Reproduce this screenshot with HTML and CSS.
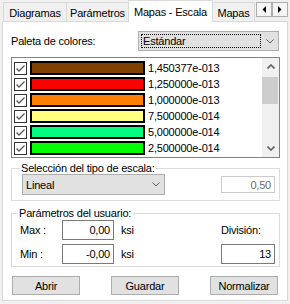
FILE: index.html
```html
<!DOCTYPE html>
<html lang="es">
<head>
    <meta charset="UTF-8">
    <title>Mapas - Escala</title>
    <link rel="stylesheet" href="styles.css">
</head>
<body>
    <div class="window">
        <div class="tabbar">
            <div class="tab t-diag">Diagramas</div>
            <div class="tab t-param">Parámetros</div>
            <div class="tab active t-escala">Mapas - Escala</div>
            <div class="tab t-mapas">Mapas</div>
            <div class="tab-arrows">
                <span class="arrow-btn"><svg width="4" height="7" viewBox="0 0 4 7"><polygon points="4,0 4,7 0.5,3.5" fill="#000"/></svg></span>
                <span class="arrow-btn"><svg width="4" height="7" viewBox="0 0 4 7"><polygon points="0,0 0,7 3.5,3.5" fill="#000"/></svg></span>
            </div>
        </div>

        <div class="panel">
            <div class="palette-row">
                <span class="label">Paleta de colores:</span>
                <div class="select">
                    <span class="focus">Estándar</span>
                    <span class="chevron"><svg width="8" height="5" viewBox="0 0 8 5"><polyline points="0.5,0.5 4,4 7.5,0.5" fill="none" stroke="#606060" stroke-width="1"/></svg></span>
                </div>
            </div>

            <div class="list">
                <div class="rows" id="rows"></div>
                <div class="scrollbar">
                    <div class="sb-btn"><svg width="8" height="5" viewBox="0 0 8 5"><polyline points="0.5,4.5 4,1 7.5,4.5" fill="none" stroke="#606060" stroke-width="1.6"/></svg></div>
                    <div class="sb-track"><div class="sb-thumb"></div></div>
                    <div class="sb-btn"><svg width="8" height="5" viewBox="0 0 8 5"><polyline points="0.5,0.5 4,4 7.5,0.5" fill="none" stroke="#606060" stroke-width="1.6"/></svg></div>
                </div>
            </div>

            <fieldset class="group group-scale">
                <legend>Selección del tipo de escala:</legend>
                <div class="scale-row">
                    <div class="combo">
                        <span class="combo-text">Lineal</span>
                        <span class="chevron"><svg width="8" height="5" viewBox="0 0 8 5"><polyline points="0.5,0.5 4,4 7.5,0.5" fill="none" stroke="#606060" stroke-width="1"/></svg></span>
                    </div>
                    <input class="box disabled" type="text" value="0,50" disabled>
                </div>
            </fieldset>

            <fieldset class="group group-user">
                <legend>Parámetros del usuario:</legend>
                <div class="param-row">
                    <span class="param-label">Max :</span>
                    <input class="box num" type="text" value="0,00">
                    <span class="unit">ksi</span>
                    <span class="division">División:</span>
                </div>
                <div class="param-row second">
                    <span class="param-label">Min :</span>
                    <input class="box num" type="text" value="-0,00">
                    <span class="unit">ksi</span>
                    <input class="box num division-box" type="text" value="13">
                </div>
            </fieldset>

            <div class="buttons">
                <button class="button">Abrir</button>
                <button class="button">Guardar</button>
                <button class="button">Normalizar</button>
            </div>
        </div>
    </div>

    <script>
        const palette = [
            ['#804000', '1,450377e-013'],
            ['#ff0000', '1,250000e-013'],
            ['#ff8000', '1,000000e-013'],
            ['#ffff80', '7,500000e-014'],
            ['#00ff80', '5,000000e-014'],
            ['#00ff00', '2,500000e-014']
        ];

        const check = '<svg width="11" height="11" viewBox="0 0 11 11"><polyline points="1.5,5.5 4,8 9.5,2.5" fill="none" stroke="#555" stroke-width="1.3"/></svg>';

        document.getElementById('rows').innerHTML = palette.map(([color, value]) => `
            <div class="row">
                <span class="check">${check}</span>
                <span class="swatch" style="background-color: ${color}"></span>
                <span class="value">${value}</span>
            </div>`).join('');
    </script>
</body>
</html>
```

FILE: styles.css
```css
body {
    margin: 0;
    background-color: #f0f0f0;
    font-family: "Liberation Sans", Arial, sans-serif;
    font-size: 11px;
    letter-spacing: -0.2px;
    color: #000;
}
.window {
    width: 290px;
    height: 304px;
    overflow: hidden;
    background-color: #f0f0f0;
}

/* tabs */
.tabbar {
    display: flex;
    align-items: flex-end;
    height: 21px;
    padding-left: 3px;
}
.tab {
    box-sizing: border-box;
    height: 19px;
    margin-left: -1px;
    padding-top: 2px;
    border: 1px solid #d9d9d9;
    border-bottom: none;
    background-color: #f0f0f0;
    text-align: center;
    line-height: 16px;
    white-space: nowrap;
}
.tab:first-child {
    margin-left: 0;
}
.tab.active {
    height: 22px;
    margin-bottom: -1px;
    padding-top: 3px;
    background-color: #fff;
    position: relative;
    z-index: 1;
}
.t-diag { width: 64px; }
.t-param { width: 63px; }
.t-escala { width: 85px; }
.t-mapas { width: 43px; }
.tab-arrows {
    display: flex;
    align-self: flex-start;
    margin: 2px 2px 0 auto;
}
.arrow-btn {
    box-sizing: border-box;
    display: flex;
    align-items: center;
    justify-content: center;
    width: 16px;
    height: 15px;
    border: 1px solid #adadad;
    background-color: #f5f5f5;
}

/* panel */
.panel {
    box-sizing: border-box;
    display: flex;
    flex-direction: column;
    width: 286px;
    height: 280px;
    margin-left: 2px;
    padding: 9px 7px 0 8px;
    border: 1px solid #d9d9d9;
    background-color: #fff;
}
.palette-row {
    display: flex;
    height: 20px;
}
.label {
    padding-top: 4px;
    line-height: 13px;
}
.select {
    box-sizing: border-box;
    display: flex;
    align-items: center;
    width: 141px;
    height: 20px;
    margin: 0 1px 0 auto;
    padding: 2px 0 2px 2px;
    border: 1px solid #adadad;
    background-color: #e1e1e1;
}
.focus {
    box-sizing: border-box;
    width: 120px;
    height: 14px;
    padding-left: 1px;
    border: 1px dotted #000;
    line-height: 12px;
}
.chevron {
    flex: 1;
    display: flex;
    justify-content: center;
}

/* colour list */
.list {
    box-sizing: border-box;
    display: flex;
    height: 101px;
    margin-top: 6px;
    border: 1px solid #828282;
}
.rows {
    flex: 1;
    padding: 3px 0 0 2px;
    overflow: hidden;
}
.row {
    display: flex;
    align-items: flex-start;
    height: 16px;
}
.check {
    box-sizing: border-box;
    display: flex;
    align-items: center;
    justify-content: center;
    width: 13px;
    height: 13px;
    margin-top: 1px;
    border: 1px solid #333;
    background-color: #fff;
}
.swatch {
    box-sizing: border-box;
    width: 115px;
    height: 14px;
    margin-left: 3px;
    border: 2px solid #000;
}
.value {
    margin-left: 3px;
    line-height: 14px;
}
.scrollbar {
    display: flex;
    flex-direction: column;
    width: 17px;
    background-color: #f0f0f0;
}
.sb-btn {
    display: flex;
    align-items: center;
    justify-content: center;
    height: 17px;
}
.sb-track {
    flex: 1;
    padding: 2px 1px 0 0;
}
.sb-thumb {
    height: 27px;
    background-color: #cdcdcd;
}

/* groups */
.group {
    min-width: 0;
    margin: 0;
    border: 1px solid #dcdcdc;
}
.group legend {
    margin-left: -2px;
    padding: 0 1px;
    line-height: 12px;
}
.group-scale {
    margin-top: 4px;
    padding: 0 4px 5px 10px;
}
.group-user {
    margin-top: 6px;
    padding: 1px 4px 2px 8px;
}
.scale-row {
    display: flex;
    align-items: flex-start;
}
.combo {
    box-sizing: border-box;
    display: flex;
    align-items: center;
    width: 143px;
    height: 21px;
    padding-left: 3px;
    border: 1px solid #adadad;
    background-color: #e1e1e1;
}
.combo .chevron {
    flex: none;
    margin-left: auto;
    width: 17px;
}
.box {
    box-sizing: border-box;
    margin: 0;
    padding: 0 3px 0 0;
    font: inherit;
    letter-spacing: inherit;
    text-align: right;
    background-color: #fff;
    color: #000;
    outline: none;
}
.disabled {
    width: 54px;
    height: 17px;
    margin: 2px 0 0 auto;
    border: 1px solid #ccc;
    color: #6d6d6d;
}
.param-row {
    display: flex;
    align-items: center;
    height: 20px;
}
.param-row.second {
    margin-top: 4px;
}
.param-label {
    width: 42px;
}
.num {
    width: 52px;
    height: 20px;
    border: 1px solid #7a7a7a;
}
.unit {
    margin-left: 7px;
}
.division {
    width: 54px;
    margin-left: auto;
}
.division-box {
    width: 54px;
    margin-left: auto;
}

/* buttons */
.buttons {
    display: flex;
    justify-content: space-between;
    margin-top: 9px;
    padding: 0 2px 0 1px;
}
.button {
    box-sizing: border-box;
    width: 68px;
    height: 19px;
    padding: 0;
    border: 1px solid #adadad;
    background-color: #e1e1e1;
    font: inherit;
    letter-spacing: inherit;
    color: #000;
}
```
